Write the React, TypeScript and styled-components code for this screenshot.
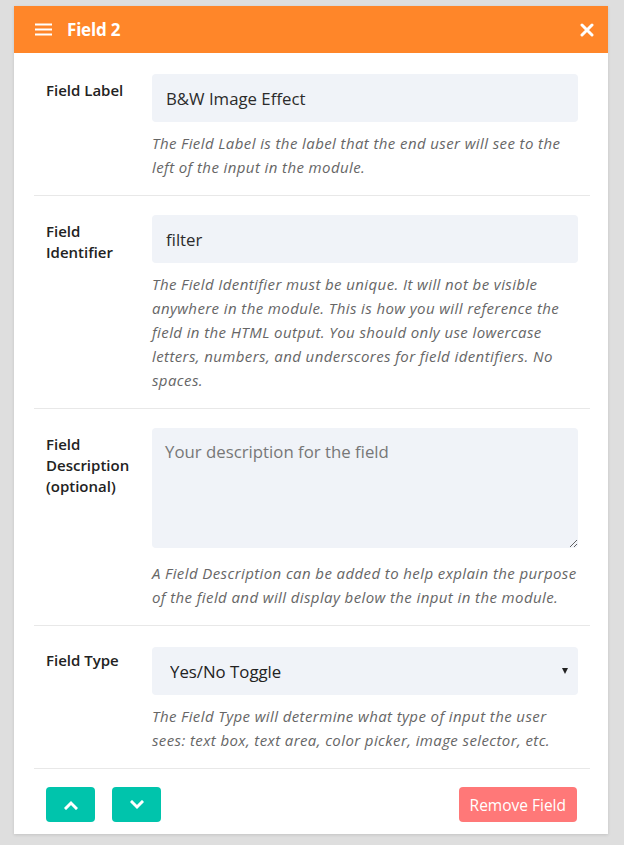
import { memo } from 'react';
import styled, { createGlobalStyle } from 'styled-components';

const GlobalStyle = createGlobalStyle`
    html, body {
        margin: 0;
        padding: 0;
        background: #dedede;
        font-family: "Open Sans", "Noto Sans", sans-serif;
    }

    * {
        box-sizing: border-box;
    }
`;

const StyledPage = styled.div`
    width: 624px;
    min-height: 845px;
    padding: 6px 16px 10px 14px;
    background: #dedede;
`;

const StyledCard = styled.div`
    background: #ffffff;
    box-shadow: 0 1px 3px rgba(0, 0, 0, 0.12);
`;

const StyledHeader = styled.header`
    height: 47px;
    padding: 0 14px 0 21px;

    display: flex;
    align-items: center;

    background: #ff8629;
    color: #ffffff;

    > .headerTitle {
        margin-left: 15px;
        flex: 1;

        font-size: 17px;
        font-weight: 700;
        letter-spacing: -0.2px;
    }
`;

const StyledIconButton = styled.button`
    padding: 0;
    border: none;
    background: none;

    display: flex;
    align-items: center;
    justify-content: center;

    color: #ffffff;
    cursor: pointer;
`;

const StyledBody = styled.div`
    padding: 2px 18px 0 20px;
`;

const StyledRow = styled.div<{ $top?: number }>`
    padding: ${({ $top }) => $top ?? 19}px 12px 16px;

    display: grid;
    grid-template-columns: 106px 1fr;

    border-bottom: 1px solid #e8e8e8;
`;

const StyledLabel = styled.label<{ $offset?: number }>`
    margin-top: ${({ $offset }) => $offset ?? 6}px;

    color: #222222;
    font-size: 15px;
    line-height: 21px;
    font-weight: 600;
`;

const StyledControl = styled.div`
    min-width: 0;
`;

const StyledInput = styled.input`
    width: 100%;
    height: 48px;
    padding: 0 14px;

    border: none;
    border-radius: 4px;
    background: #f0f3f8;
    outline: none;

    color: #2b2b2b;
    font-family: inherit;
    font-size: 16.8px;
`;

const StyledTextarea = styled.textarea`
    display: block;
    width: 100%;
    height: 120px;
    margin-bottom: 13px;
    padding: 11px 13px;

    border: none;
    border-radius: 4px;
    background: #f0f3f8;
    outline: none;
    resize: vertical;

    color: #2b2b2b;
    font-family: inherit;
    font-size: 16.8px;
    line-height: 26px;

    &::placeholder {
        color: #777777;
    }
`;

const StyledSelectWrap = styled.div`
    position: relative;

    > .selectArrow {
        position: absolute;
        top: 21px;
        right: 10px;

        width: 0;
        height: 0;

        border-left: 3.5px solid transparent;
        border-right: 3.5px solid transparent;
        border-top: 6px solid #222222;

        pointer-events: none;
    }
`;

const StyledSelect = styled.select`
    width: 100%;
    height: 48px;
    padding: 0 18px;

    appearance: none;
    border: none;
    border-radius: 4px;
    background: #f0f3f8;
    outline: none;

    color: #222222;
    font-family: inherit;
    font-size: 16.8px;
`;

const StyledHelp = styled.p`
    margin: 9px 0 0;

    color: #666666;
    font-size: 15px;
    line-height: 24px;
    letter-spacing: 0.4px;
    font-style: italic;
`;

const StyledFooter = styled.div`
    padding: 18px 13px 12px 12px;

    display: flex;
    align-items: center;
    gap: 17px;

    > .footerSpacer {
        flex: 1;
    }
`;

const StyledButton = styled.button<{ $variant: 'move' | 'danger' }>`
    height: 35px;
    padding: 0 ${({ $variant }) => ($variant === 'move' ? 0 : 11)}px;
    width: ${({ $variant }) => ($variant === 'move' ? '49px' : 'auto')};

    display: flex;
    align-items: center;
    justify-content: center;

    border: none;
    border-radius: 4px;
    background: ${({ $variant }) => ($variant === 'move' ? '#00c4ac' : '#ff7878')};

    color: #ffffff;
    font-family: inherit;
    font-size: 15.5px;
    cursor: pointer;
`;

function MenuIcon() {
    return (
        <svg width="17" height="13" viewBox="0 0 17 13">
            <rect x="0" y="0.5" width="17" height="2" fill="#ffffff" />
            <rect x="0" y="5.5" width="17" height="2" fill="#ffffff" />
            <rect x="0" y="10.5" width="17" height="2" fill="#ffffff" />
        </svg>
    );
}

function CloseIcon() {
    return (
        <svg width="14" height="14" viewBox="0 0 14 14">
            <path d="M2 2 L12 12 M12 2 L2 12" stroke="#ffffff" strokeWidth="3" strokeLinecap="round" />
        </svg>
    );
}

function ChevronIcon(props: { up?: boolean }) {
    const { up } = props;

    return (
        <svg width="14" height="10" viewBox="0 0 14 10">
            <path
                d={up ? 'M2 8 L7 3 L12 8' : 'M2 2 L7 7 L12 2'}
                fill="none"
                stroke="#ffffff"
                strokeWidth="3"
                strokeLinecap="square" />
        </svg>
    );
}

function App() {
    return (
        <>
            <GlobalStyle />
            <StyledPage>
                <StyledCard>
                    <StyledHeader>
                        <MenuIcon />
                        <div className="headerTitle">
                            Field 2
                        </div>
                        <StyledIconButton aria-label="Close">
                            <CloseIcon />
                        </StyledIconButton>
                    </StyledHeader>

                    <StyledBody>
                        <StyledRow>
                            <StyledLabel>
                                Field Label
                            </StyledLabel>
                            <StyledControl>
                                <StyledInput defaultValue="B&W Image Effect" />
                                <StyledHelp>
                                    The Field Label is the label that the end user will see to the left of the input in the module.
                                </StyledHelp>
                            </StyledControl>
                        </StyledRow>

                        <StyledRow>
                            <StyledLabel>
                                Field<br />Identifier
                            </StyledLabel>
                            <StyledControl>
                                <StyledInput defaultValue="filter" />
                                <StyledHelp>
                                    The Field Identifier must be unique. It will not be visible anywhere in the module. This is how you will reference the field in the HTML output. You should only use lowercase letters, numbers, and underscores for field identifiers. No spaces.
                                </StyledHelp>
                            </StyledControl>
                        </StyledRow>

                        <StyledRow>
                            <StyledLabel>
                                Field<br />Description<br />(optional)
                            </StyledLabel>
                            <StyledControl>
                                <StyledTextarea placeholder="Your description for the field" />
                                <StyledHelp>
                                    A Field Description can be added to help explain the purpose of the field and will display below the input in the module.
                                </StyledHelp>
                            </StyledControl>
                        </StyledRow>

                        <StyledRow $top={21}>
                            <StyledLabel $offset={3}>
                                Field Type
                            </StyledLabel>
                            <StyledControl>
                                <StyledSelectWrap>
                                    <StyledSelect defaultValue="toggle">
                                        <option value="toggle">Yes/No Toggle</option>
                                    </StyledSelect>
                                    <span className="selectArrow" />
                                </StyledSelectWrap>
                                <StyledHelp>
                                    The Field Type will determine what type of input the user sees: text box, text area, color picker, image selector, etc.
                                </StyledHelp>
                            </StyledControl>
                        </StyledRow>

                        <StyledFooter>
                            <StyledButton $variant="move" aria-label="Move up">
                                <ChevronIcon up />
                            </StyledButton>
                            <StyledButton $variant="move" aria-label="Move down">
                                <ChevronIcon />
                            </StyledButton>
                            <div className="footerSpacer" />
                            <StyledButton $variant="danger">
                                Remove Field
                            </StyledButton>
                        </StyledFooter>
                    </StyledBody>
                </StyledCard>
            </StyledPage>
        </>
    );
}

export default memo(App);
